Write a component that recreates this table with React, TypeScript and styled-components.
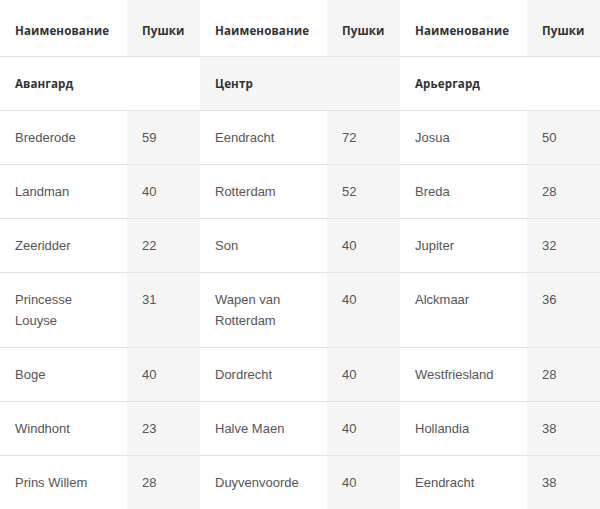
import styled, { createGlobalStyle } from 'styled-components';

const GlobalStyle = createGlobalStyle`
  body {
    margin: 0;
    background: #fff;
  }
`;

const Table = styled.table`
  width: 600px;
  border-collapse: collapse;
  table-layout: fixed;
  font-family: 'Liberation Sans', Arial, sans-serif;
`;

const NameCol = styled.col`
  width: 127px;
`;

const CountCol = styled.col`
  width: 73px;
  background-color: #f5f5f5;
`;

const HeadRow = styled.tr`
  border-bottom: 1px solid #e3e3e3;
`;

const HeadCell = styled.th`
  padding: 20px 15px 14px;
  line-height: 22px;
  text-align: left;
  font-family: 'Open Sans', 'Noto Sans', sans-serif;
  font-size: 11.6px;
  font-weight: 700;
  letter-spacing: 0.1px;
  color: #333;
`;

const SectionCell = styled.td<{ $shaded?: boolean }>`
  padding: 16px 15px;
  line-height: 21px;
  font-family: 'Open Sans', 'Noto Sans', sans-serif;
  font-size: 11.6px;
  font-weight: 700;
  letter-spacing: 0.1px;
  color: #333;
  background-color: ${(p) => (p.$shaded ? '#f5f5f5' : '#fff')};
`;

const Row = styled.tr`
  border-bottom: 1px solid #e3e3e3;
`;

const Cell = styled.td`
  padding: 16px 15px;
  line-height: 21px;
  font-family: 'Liberation Sans', Arial, sans-serif;
  font-size: 13px;
  color: #555;
  vertical-align: top;
`;

const ships: [string, number, string, number, string, number][] = [
  ['Brederode', 59, 'Eendracht', 72, 'Josua', 50],
  ['Landman', 40, 'Rotterdam', 52, 'Breda', 28],
  ['Zeeridder', 22, 'Son', 40, 'Jupiter', 32],
  ['Princesse Louyse', 31, 'Wapen van Rotterdam', 40, 'Alckmaar', 36],
  ['Boge', 40, 'Dordrecht', 40, 'Westfriesland', 28],
  ['Windhont', 23, 'Halve Maen', 40, 'Hollandia', 38],
  ['Prins Willem', 28, 'Duyvenvoorde', 40, 'Eendracht', 38],
];

export default function App() {
  return (
    <>
      <GlobalStyle />
      <Table>
        <colgroup>
          <NameCol />
          <CountCol />
          <NameCol />
          <CountCol />
          <NameCol />
          <CountCol />
        </colgroup>
        <thead>
          <HeadRow>
            <HeadCell>Наименование</HeadCell>
            <HeadCell>Пушки</HeadCell>
            <HeadCell>Наименование</HeadCell>
            <HeadCell>Пушки</HeadCell>
            <HeadCell>Наименование</HeadCell>
            <HeadCell>Пушки</HeadCell>
          </HeadRow>
        </thead>
        <tbody>
          <Row>
            <SectionCell colSpan={2}>Авангард</SectionCell>
            <SectionCell colSpan={2} $shaded>
              Центр
            </SectionCell>
            <SectionCell colSpan={2}>Арьергард</SectionCell>
          </Row>
          {ships.map((r, i) => (
            <Row key={i}>
              {r.map((v, j) => (
                <Cell key={j}>{v}</Cell>
              ))}
            </Row>
          ))}
        </tbody>
      </Table>
    </>
  );
}
